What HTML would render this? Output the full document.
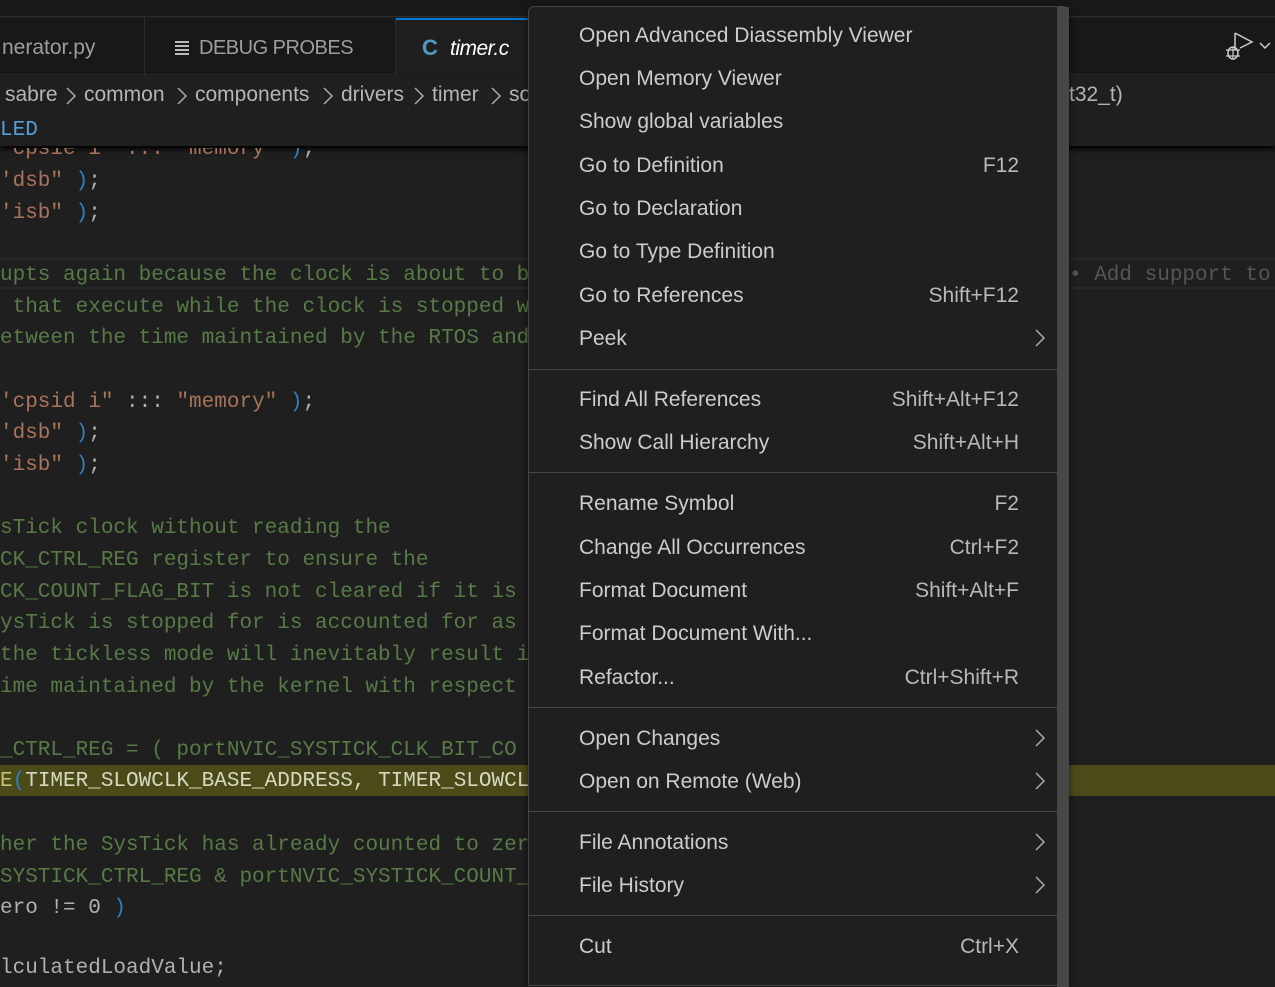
<!DOCTYPE html>
<html><head><meta charset="utf-8"><style>
*{margin:0;padding:0;box-sizing:border-box}
body{width:1275px;height:972px;overflow:hidden;background:#1f1f1f;position:relative;font-family:"Liberation Sans",sans-serif}
.abs{position:absolute}
.code{position:absolute;left:0;font-family:"Liberation Mono",monospace;font-size:21px;white-space:pre;line-height:32px;height:32px}
.c{color:#577a46}.s{color:#a8735a}.p{color:#2f7ec4}.w{color:#b0b0b0}
.menu{position:absolute;left:528px;top:6px;width:541px;height:980px;background:#1f1f1f;border:1px solid #454545;border-radius:6px 6px 0 0;box-shadow:0 2px 8px rgba(0,0,0,.6)}
.it{position:absolute;left:50px;width:440px;font-size:21px;color:#cccccc;height:30px;line-height:30px}
.it .k{position:absolute;right:0;top:0;color:#b8b8b8}
.ch{position:absolute;right:-28px;top:4px}
.sep{position:absolute;left:0;width:528px;height:1px;background:#454545}
.bc{position:absolute;top:83px;font-size:21px;color:#b5b5b5}
.bcv{position:absolute;top:85px}
</style></head><body>
<div class="abs" style="left:0;top:0;width:1275px;height:17px;background:#181818;border-bottom:1px solid #2b2b2b"></div>
<div class="abs" style="left:0;top:18px;width:1275px;height:57px;background:#181818;border-bottom:1px solid #2b2b2b"></div>
<div class="abs" style="left:0;top:18px;width:145px;height:57px;border-right:1px solid #2b2b2b"></div>
<div class="abs" style="left:2px;top:36px;font-size:21px;color:#9d9d9d">nerator.py</div>
<div class="abs" style="left:145px;top:18px;width:251px;height:57px;border-right:1px solid #2b2b2b"></div>
<div class="abs" style="left:175px;top:41px;width:14px;height:2px;background:#bbb;box-shadow:0 4px 0 #bbb,0 8px 0 #bbb,0 12px 0 #bbb"></div>
<div class="abs" style="left:199px;top:37px;font-size:20px;color:#9d9d9d;letter-spacing:-0.5px">DEBUG PROBES</div>
<div class="abs" style="left:396px;top:18px;width:140px;height:58px;background:#1f1f1f;border-top:2px solid #0078d4"></div>
<div class="abs" style="left:422px;top:35px;font-size:22px;font-weight:bold;color:#4d9ac4">C</div>
<div class="abs" style="left:450px;top:37px;font-size:21px;font-style:italic;color:#fff;letter-spacing:-0.5px">timer.c</div>
<svg class="abs" style="left:1222px;top:30px" width="55" height="35" viewBox="0 0 55 35"><path d="M13 3 L13 20 M13 3 L30 12 L18 18" fill="none" stroke="#ccc" stroke-width="1.5"/><ellipse cx="11" cy="23" rx="5" ry="6" fill="none" stroke="#ccc" stroke-width="1.5"/><path d="M4 20h14M4 26h14M11 17v12" stroke="#ccc" stroke-width="1.2"/><path d="M38 13l5 5 5-5" fill="none" stroke="#ccc" stroke-width="1.5"/></svg>
<div class="abs" style="left:0;top:76px;width:1275px;height:70px;background:#1f1f1f;box-shadow:0 3px 5px #000"></div>
<div class="bc" style="left:5px">sabre</div>
<div class="bc" style="left:84px">common</div>
<div class="bc" style="left:195px">components</div>
<div class="bc" style="left:341px">drivers</div>
<div class="bc" style="left:432px">timer</div>
<div class="bc" style="left:509px">so</div>
<svg class="bcv" style="left:64px" width="14" height="22"><path d="M3 3l8 8-8 8" fill="none" stroke="#aaa" stroke-width="1.5"/></svg>
<svg class="bcv" style="left:175px" width="14" height="22"><path d="M3 3l8 8-8 8" fill="none" stroke="#aaa" stroke-width="1.5"/></svg>
<svg class="bcv" style="left:321px" width="14" height="22"><path d="M3 3l8 8-8 8" fill="none" stroke="#aaa" stroke-width="1.5"/></svg>
<svg class="bcv" style="left:412px" width="14" height="22"><path d="M3 3l8 8-8 8" fill="none" stroke="#aaa" stroke-width="1.5"/></svg>
<svg class="bcv" style="left:489px" width="14" height="22"><path d="M3 3l8 8-8 8" fill="none" stroke="#aaa" stroke-width="1.5"/></svg>
<div class="bc" style="left:1069px">t32_t)</div>
<div class="code" style="top:115px;color:#4fa0e0">LED</div>
<div class="abs" style="left:0;top:258px;width:1275px;height:31px;border-top:2px solid #282828;border-bottom:2px solid #282828"></div>
<div class="abs" style="left:0;top:765px;width:1275px;height:31px;background:#4b4b1a"></div>
<div class="code s" style="top:134px;clip-path:inset(14px 0 0 0)">'cpsie i" ::: "memory" <span class="p">)</span><span class="w">;</span></div>
<div class="code" style="top:166px"><span class="s">'dsb"</span> <span class="p">)</span><span class="w">;</span></div>
<div class="code" style="top:198px"><span class="s">'isb"</span> <span class="p">)</span><span class="w">;</span></div>
<div class="code c" style="top:260px">upts again because the clock is about to b</div>
<div class="code" style="top:260px;left:1069px;color:#555">• Add support to</div>
<div class="code c" style="top:292px"> that execute while the clock is stopped w</div>
<div class="code c" style="top:323px">etween the time maintained by the RTOS and</div>
<div class="code" style="top:387px"><span class="s">'cpsid i"</span> <span class="w">:::</span> <span class="s">"memory"</span> <span class="p">)</span><span class="w">;</span></div>
<div class="code" style="top:418px"><span class="s">'dsb"</span> <span class="p">)</span><span class="w">;</span></div>
<div class="code" style="top:450px"><span class="s">'isb"</span> <span class="p">)</span><span class="w">;</span></div>
<div class="code c" style="top:513px">sTick clock without reading the</div>
<div class="code c" style="top:545px">CK_CTRL_REG register to ensure the</div>
<div class="code c" style="top:577px">CK_COUNT_FLAG_BIT is not cleared if it is</div>
<div class="code c" style="top:608px">ysTick is stopped for is accounted for as</div>
<div class="code c" style="top:640px">the tickless mode will inevitably result i</div>
<div class="code c" style="top:672px">ime maintained by the kernel with respect</div>
<div class="code c" style="top:735px">_CTRL_REG = ( portNVIC_SYSTICK_CLK_BIT_CO</div>
<div class="code" style="top:766px;color:#d8d8c0"><span style="color:#c8c070">E</span><span class="p">(</span>TIMER_SLOWCLK_BASE_ADDRESS, TIMER_SLOWCL</div>
<div class="code c" style="top:830px">her the SysTick has already counted to zer</div>
<div class="code c" style="top:862px">SYSTICK_CTRL_REG &amp; portNVIC_SYSTICK_COUNT_</div>
<div class="code" style="top:893px"><span class="w">ero != 0 </span><span class="p">)</span></div>
<div class="code w" style="top:953px">lculatedLoadValue;</div>
<div class="menu">
<div class="abs" style="left:528px;top:0;width:12px;height:980px;background:#474747"></div>
<div class="it" style="top:14px">Open Advanced Diassembly Viewer</div>
<div class="it" style="top:57px">Open Memory Viewer</div>
<div class="it" style="top:100px">Show global variables</div>
<div class="it" style="top:144px">Go to Definition<span class="k">F12</span></div>
<div class="it" style="top:187px">Go to Declaration</div>
<div class="it" style="top:230px">Go to Type Definition</div>
<div class="it" style="top:274px">Go to References<span class="k">Shift+F12</span></div>
<div class="it" style="top:317px">Peek<svg class="ch" width="14" height="20"><path d="M3 2l8 8-8 8" fill="none" stroke="#aaa" stroke-width="1.5"/></svg></div>
<div class="sep" style="top:362px"></div>
<div class="it" style="top:378px">Find All References<span class="k">Shift+Alt+F12</span></div>
<div class="it" style="top:421px">Show Call Hierarchy<span class="k">Shift+Alt+H</span></div>
<div class="sep" style="top:465px"></div>
<div class="it" style="top:482px">Rename Symbol<span class="k">F2</span></div>
<div class="it" style="top:526px">Change All Occurrences<span class="k">Ctrl+F2</span></div>
<div class="it" style="top:569px">Format Document<span class="k">Shift+Alt+F</span></div>
<div class="it" style="top:612px">Format Document With...</div>
<div class="it" style="top:656px">Refactor...<span class="k">Ctrl+Shift+R</span></div>
<div class="sep" style="top:700px"></div>
<div class="it" style="top:717px">Open Changes<svg class="ch" width="14" height="20"><path d="M3 2l8 8-8 8" fill="none" stroke="#aaa" stroke-width="1.5"/></svg></div>
<div class="it" style="top:760px">Open on Remote (Web)<svg class="ch" width="14" height="20"><path d="M3 2l8 8-8 8" fill="none" stroke="#aaa" stroke-width="1.5"/></svg></div>
<div class="sep" style="top:804px"></div>
<div class="it" style="top:821px">File Annotations<svg class="ch" width="14" height="20"><path d="M3 2l8 8-8 8" fill="none" stroke="#aaa" stroke-width="1.5"/></svg></div>
<div class="it" style="top:864px">File History<svg class="ch" width="14" height="20"><path d="M3 2l8 8-8 8" fill="none" stroke="#aaa" stroke-width="1.5"/></svg></div>
<div class="sep" style="top:908px"></div>
<div class="it" style="top:925px">Cut<span class="k">Ctrl+X</span></div>
</div>
</body></html>
